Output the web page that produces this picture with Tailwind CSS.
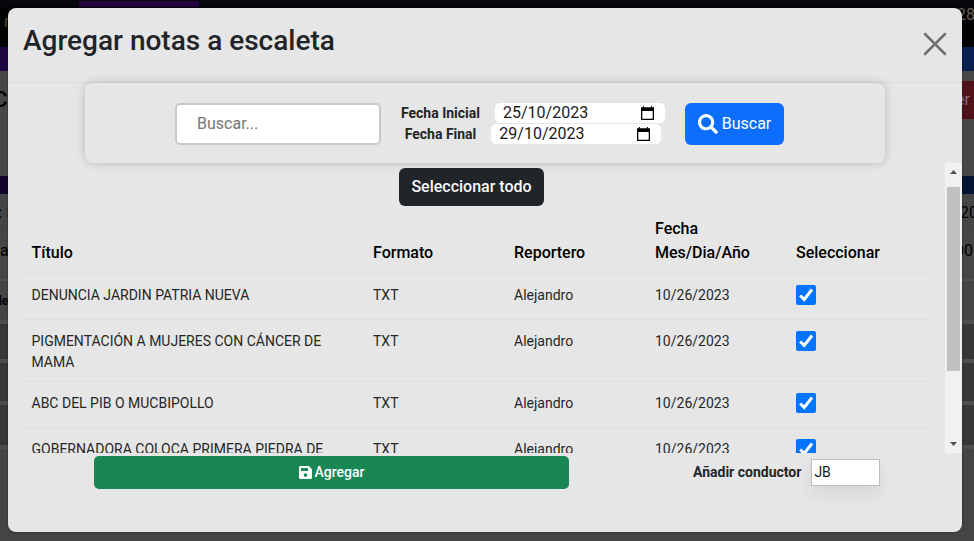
<!DOCTYPE html>
<html lang="es">
<head>
<meta charset="utf-8">
<title>Escaleta</title>
<script src="https://cdn.jsdelivr.net/npm/@tailwindcss/browser@4"></script>
</head>
<body class="relative h-[541px] w-[974px] overflow-hidden bg-[#444444] font-['Roboto',sans-serif] text-[#212529]">

<!-- Page behind the dialog -->
<div class="flex flex-col text-black" aria-hidden="true">
  <div class="flex h-[7px] bg-[#07080d] pt-px"><div class="ml-[79px] h-[7px] w-[120px] bg-[#23043f]"></div></div>
  <div class="flex h-10 justify-between bg-[#030303] text-base leading-[15px] text-[#66615a]"><span class="pl-1 pt-[7px] text-[#54492b]">n</span><span class="-mr-px">28</span></div>
  <div class="h-6 bg-linear-to-r from-[#1d0640] to-[#09204e]"></div>
  <div class="flex h-[105px] justify-between bg-[#474747] pt-2.5"><span class="-ml-[7px] pt-[5px] text-[22px] font-medium leading-7">C</span><div class="h-[38px] w-20 bg-[#4f1219] pr-1 text-right text-base leading-[38px] text-[#807376]">er</div></div>
  <div class="h-[18px] bg-linear-to-r from-[#12032b] to-[#061433]"></div>
  <div class="flex h-[38px] justify-between bg-[#454545] text-base leading-[38px]"><span class="-ml-[2px] font-medium text-[#080d20]">: <span class="text-[#4a2a12]">S</span></span><span class="-mr-1">20</span></div>
  <div class="flex h-[47px] justify-between bg-[#464646] text-base leading-[38px]"><span>a</span><span class="mr-px">00</span></div>
  <div class="h-[41px] border-t-2 border-[#4f4f4f] bg-[#444444] text-xs font-bold leading-[40px]"><span class="-ml-[5px]">de</span></div>
  <div class="h-[43px] border-y-4 border-[#4e4e4e] bg-[#373737] text-xs font-bold leading-[38px] text-[#11152a]"><span class="-ml-1">-</span></div>
  <div class="h-[42px] border-b-4 border-[#4e4e4e] bg-[#373737] text-xs font-bold leading-[38px] text-[#11152a]"><span class="-ml-1">-</span></div>
  <div class="h-[44px] border-b-4 border-[#4e4e4e] bg-[#373737] text-xs font-bold leading-[38px] text-[#11152a]"><span class="-ml-1">-</span></div>
</div>

<!-- Dialog -->
<section role="dialog" class="absolute left-2 top-2 flex h-[524px] w-[954px] flex-col overflow-hidden rounded-lg bg-[#e6e6e6] shadow-[0_0_2px_rgba(0,0,0,0.5)]">
  <header class="flex h-[75px] shrink-0 justify-between border-b border-[#dcdce6] pl-[15px] pr-[15px]">
    <h1 class="pt-4 text-[28px] font-medium leading-[34px]">Agregar notas a escaleta</h1>
    <button aria-label="Cerrar" class="mt-6 h-6 w-6"><svg class="h-6 w-6" viewBox="0 0 24 24" fill="none" stroke="#707070" stroke-width="2.5" stroke-linecap="round"><path d="M2 2l20 20M22 2L2 22"/></svg></button>
  </header>

  <form class="ml-[77px] flex h-20 w-[800px] shrink-0 items-start rounded-lg pl-[90px] pt-5 shadow-[0_0_10px_rgba(0,0,0,0.2)]">
    <div class="flex h-[42px] w-[206px] items-center rounded-[5px] border-2 border-[#c8c8c8] bg-white pl-5 text-base text-[#757575]">Buscar...</div>
    <div class="ml-3 flex w-[280px] flex-col items-center gap-px text-sm">
      <label class="flex h-5 items-center gap-[15px] font-bold">Fecha Inicial
        <span class="flex h-5 w-[170px] items-center justify-between rounded-[5px] bg-white pl-2 pr-[11px] text-base font-normal leading-5 text-[#1a1a1a]">25/10/2023
          <svg class="h-[15px] w-[13px]" viewBox="0 0 13 15"><path fill="#000" fill-rule="evenodd" d="M2 0h1v1.3h7V0h1v1.3h2V14H0V1.3h2zM1.3 5v7.7h10.4V5z"/></svg>
        </span>
      </label>
      <label class="flex h-5 items-center gap-[15px] font-bold">Fecha Final
        <span class="flex h-5 w-[170px] items-center justify-between rounded-[5px] bg-white pl-2 pr-[11px] text-base font-normal leading-5 text-[#1a1a1a]">29/10/2023
          <svg class="h-[15px] w-[13px]" viewBox="0 0 13 15"><path fill="#000" fill-rule="evenodd" d="M2 0h1v1.3h7V0h1v1.3h2V14H0V1.3h2zM1.3 5v7.7h10.4V5z"/></svg>
        </span>
      </label>
    </div>
    <div class="ml-3 flex h-[42px] w-[99px] items-center justify-center gap-1 rounded-md bg-[#0d6efd] text-base text-white">
      <svg class="h-5 w-5" viewBox="0 0 512 512" fill="currentColor"><path d="M505 442.7L405.300 343c-4.500-4.500-10.600-7-17-7H372c27.600-35.300 44-79.700 44-128C416 93.100 322.900 0 208 0S0 93.100 0 208s93.100 208 208 208c48.300 0 92.700-16.400 128-44v16.300c0 6.400 2.500 12.500 7 17l99.700 99.700c9.400 9.400 24.600 9.400 33.900 0l28.300-28.300c9.400-9.400 9.400-24.600.1-34zM208 336c-70.700 0-128-57.200-128-128 0-70.700 57.200-128 128-128 70.700 0 128 57.200 128 128 0 70.700-57.200 128-128 128z"/></svg>
      Buscar
    </div>
  </form>

  <div class="flex h-[290px] shrink-0 overflow-hidden">
    <div class="w-[937px] pl-4">
      <button class="ml-[375px] mt-[5px] block h-[38px] w-[145px] rounded-md bg-[#212529] text-base font-medium text-[#f8f9fa]">Seleccionar todo</button>
      <div class="w-[904px]">
        <div class="grid h-[68px] grid-cols-[341px_141px_141px_141px_140px] items-end border-b border-[#dfdfdf] pb-2 text-base font-medium leading-6 text-black *:pl-2">
          <div class="-ml-[0.5px]">Título</div><div>Formato</div><div>Reportero</div><div>Fecha<br>Mes/Dia/Año</div><div>Seleccionar</div>
        </div>
        <div id="rows"></div>
      </div>
    </div>
    <div class="flex w-[17px] flex-col items-center justify-between bg-[#f1f1f1] pb-[7px] pt-[7px]">
      <svg class="h-1 w-[7px] shrink-0" viewBox="0 0 7 4"><path fill="#505050" d="M3.500 0L7 4H0z"/></svg>
      <div class="mb-auto mt-[13px] h-[184px] w-[13px] bg-[#c1c1c1]"></div>
      <svg class="h-1 w-[7px] shrink-0" viewBox="0 0 7 4"><path fill="#505050" d="M0 0h7L3.500 4z"/></svg>
    </div>
  </div>

  <footer class="flex items-start pl-[86px] pt-[3px] text-sm">
    <button class="flex h-[33px] w-[475px] items-center justify-center gap-[3px] rounded-[5px] bg-[#198754] pb-px font-medium text-white">
      <svg class="h-[13px] w-[13px]" viewBox="0 0 13 13" fill="currentColor"><path fill-rule="evenodd" d="M1.500 0h8.300L13 3.200v8.300c0 .8-.7 1.500-1.500 1.500h-10C.7 13 0 12.300 0 11.500v-10C0 .7.700 0 1.500 0zM2 2v3h7V2zM6.500 7.300a1.800 1.800 0 100 3.600 1.800 1.800 0 000-3.600z"/></svg>
      Agregar
    </button>
    <label class="ml-[124px] mt-[3px] flex items-center gap-[10px] font-bold"><span class="pb-0.5">Añadir conductor</span>
      <span class="flex h-[27px] w-[69px] items-center border border-[#bdbdbd] bg-white pb-px pl-[2px] font-normal text-[#1a1a1a] shadow-[0_8px_16px_rgba(33,37,41,0.08)]">JB</span>
    </label>
  </footer>
</section>

<template id="row">
  <div class="grid grid-cols-[341px_141px_141px_141px_140px] border-b border-[#dfdfdf] pt-[11px] text-sm leading-[21px] text-[#262626] *:pl-2">
    <div class="-ml-[0.5px] pr-3"></div><div>TXT</div><div>Alejandro</div><div>10/26/2023</div>
    <div class="h-[34px]"><svg class="h-5 w-5" viewBox="0 0 20 20"><rect width="20" height="20" rx="2" fill="#0075ff"/><path d="M4.200 10.500l4 4L16 4.500" fill="none" stroke="#fff" stroke-width="3"/></svg></div>
  </div>
</template>
<script>
const titles = ["DENUNCIA JARDIN PATRIA NUEVA", "PIGMENTACIÓN A MUJERES CON CÁNCER DE MAMA", "ABC DEL PIB O MUCBIPOLLO", "GOBERNADORA COLOCA PRIMERA PIEDRA DE"];
const heights = [46, 62, 46, 62];
titles.forEach((title, i) => {
  const row = document.getElementById("row").content.firstElementChild.cloneNode(true);
  row.firstElementChild.textContent = title;
  row.style.height = heights[i] + "px";
  document.getElementById("rows").append(row);
});
</script>
</body>
</html>
